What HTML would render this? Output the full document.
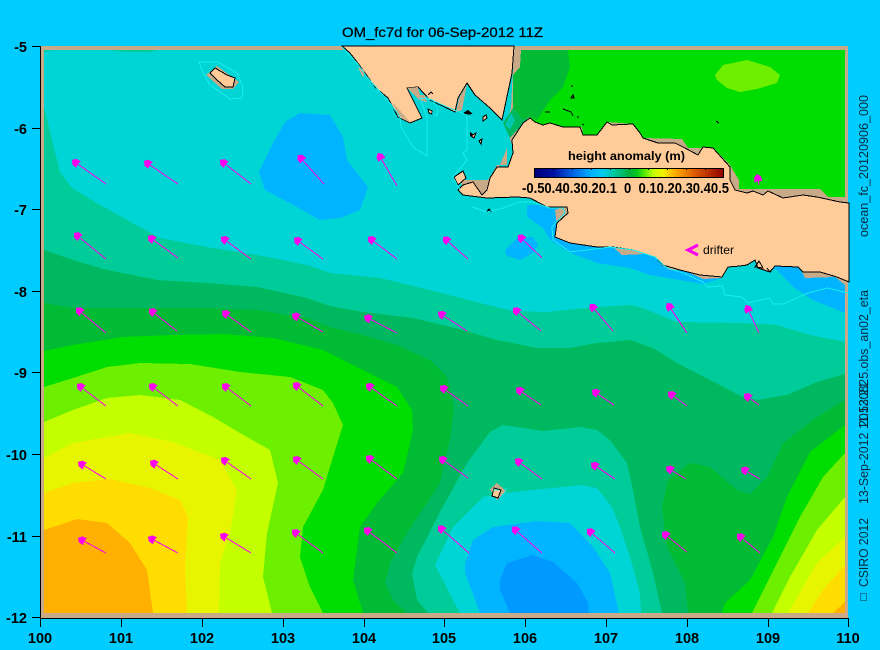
<!DOCTYPE html>
<html><head><meta charset="utf-8"><style>
html,body{margin:0;padding:0;background:#00CCFF;width:880px;height:650px;overflow:hidden}
svg{display:block}
text{font-family:"Liberation Sans",sans-serif;fill:#000}
.a{font-weight:bold;font-size:14.5px}
.r{font-size:12.5px;fill:#0a2a3a}
.c{fill:none;stroke:#19EDEE;stroke-width:1}
.k{fill:none;stroke:#000;stroke-width:1}
.l{fill:#FFCC99;stroke:#000;stroke-width:1}
</style></head><body>
<svg width="880" height="650" viewBox="0 0 880 650" xmlns="http://www.w3.org/2000/svg">
<defs>
<marker id="h" markerUnits="userSpaceOnUse" markerWidth="12" markerHeight="12" refX="9" refY="5.5" orient="auto"><polygon points="9,5.5 6,2 1,1.5 2,5.5 1,9.5 6,9" fill="#FF00EE"/></marker>
<linearGradient id="cb"><stop offset="0" stop-color="#000078"/><stop offset=".1" stop-color="#0010a0"/><stop offset=".2" stop-color="#0060e0"/><stop offset=".3" stop-color="#00b0ff"/><stop offset=".36" stop-color="#00ccf0"/><stop offset=".42" stop-color="#00c8a0"/><stop offset=".5" stop-color="#00b040"/><stop offset=".54" stop-color="#00c820"/><stop offset=".58" stop-color="#50e800"/><stop offset=".63" stop-color="#c4ff00"/><stop offset=".68" stop-color="#f0f000"/><stop offset=".74" stop-color="#ffb000"/><stop offset=".84" stop-color="#e06000"/><stop offset="1" stop-color="#900000"/></linearGradient>
</defs>
<rect width="880" height="650" fill="#00CCFF"/>
<g shape-rendering="crispEdges">
<rect x="44" y="50" width="801" height="563" fill="#00D5D5"/>
<polygon fill="#00CC99" points="44,52 52,50 44,50"/><polygon fill="#00CC99" points="108,50 158,50 150,52 125,52"/>
<path fill="#00B4FF" d="M300,113 330,115 343,137 347,160 368,187 360,210 340,218 320,220 297,207 265,190 259,172 272,145 285,122Z"/>
<path fill="#00B4FF" d="M505,250 517,238 533,237 538,245 533,253 520,260 507,256Z"/>
<path fill="#00B4FF" d="M527,205 527,217 543,228 550,240 570,253 590,260 597,263 630,268 650,275 703,284 722,278 722,250 777,270 793,287 813,300 845,313 845,275 600,230 560,205Z"/>
<path fill="#00CC99" d="M44,107 52,140 60,172 72,188 100,205 140,227 160,238 207,247 257,255 307,265 330,273 380,278 430,290 480,303 513,311 547,312 597,307 630,305 643,308 677,322 743,323 777,325 810,335 845,342 845,613 44,613Z"/>
<path fill="#00B860" d="M44,250 73,260 107,270 157,280 207,283 257,287 307,298 330,306 363,312 413,318 463,330 497,340 537,348 570,348 597,343 630,340 653,348 677,363 710,380 743,397 757,400 787,395 817,382 845,374 845,613 44,613Z"/>
<path fill="#00CC99" d="M428,613 417,600 412,573 417,557 440,512 467,463 490,432 503,425 543,431 580,427 597,430 610,440 627,463 633,490 640,527 653,573 662,613Z"/>
<path fill="#00D5D5" d="M460,613 453,600 435,565 453,527 483,497 513,492 553,488 580,485 597,488 612,507 620,527 630,557 640,593 641,613Z"/>
<path fill="#00B4FF" d="M480,613 465,573 465,563 473,540 493,527 537,521 570,523 593,547 610,573 619,613Z"/>
<path fill="#0099FF" d="M510,613 500,590 500,580 507,563 533,555 553,562 577,583 588,603 589,613Z"/>
<path fill="#00BB33" d="M44,303 73,308 140,308 207,308 257,310 307,318 330,327 363,335 397,345 430,360 447,377 454,407 450,440 445,460 440,483 407,533 390,563 385,583 393,600 407,613 44,613Z"/>
<path fill="#00BB33" d="M688,613 685,583 667,547 662,507 668,480 690,463 710,467 737,490 750,494 767,477 783,443 817,417 845,400 845,613Z"/>
<path fill="#00DD00" d="M44,351 73,345 123,337 173,335 223,334 273,338 323,350 363,370 397,387 412,410 413,430 403,473 377,503 360,527 353,580 363,613 44,613Z"/>
<path fill="#00DD00" d="M722,613 725,603 750,580 773,537 787,497 810,452 845,425 845,613Z"/>
<path fill="#6CF000" d="M44,387 73,378 107,367 140,363 190,364 240,372 290,377 323,390 333,403 343,425 333,457 323,490 303,527 300,557 310,587 323,613 44,613Z"/>
<path fill="#6CF000" d="M752,613 777,563 800,517 823,477 845,453 845,613Z"/>
<path fill="#C4FF00" d="M44,422 73,410 107,398 140,395 180,400 213,417 240,433 270,450 278,483 267,533 263,577 272,613 44,613Z"/>
<path fill="#C4FF00" d="M772,613 790,577 817,530 845,497 845,613Z"/>
<path fill="#E8F500" d="M44,458 73,443 130,433 173,442 220,460 237,490 230,533 220,563 219,613 44,613Z"/>
<path fill="#E8F500" d="M788,613 817,563 845,537 845,613Z"/>
<path fill="#FFDD00" d="M44,493 73,483 110,479 150,488 180,500 188,517 185,567 187,613 44,613Z"/>
<path fill="#FFDD00" d="M808,613 823,590 845,565 845,613Z"/>
<path fill="#FFB000" d="M44,530 77,519 107,523 130,543 147,570 153,613 44,613Z"/>
<path fill="#FFB000" d="M833,613 845,602 845,613Z"/>
<!-- border -->
<rect x="41" y="46" width="807" height="4" fill="#C8AA88"/>
<rect x="41" y="46" width="3" height="572" fill="#C8AA88"/>
<rect x="845" y="46" width="3" height="572" fill="#C8AA88"/>
<rect x="41" y="613" width="807" height="5" fill="#C8AA88"/>
<!-- north sea -->
<polygon fill="#C8AA88" points="514,47 848,47 848,210 739,200 512,145 505,125 511,108"/>
<polygon fill="#00DD00" points="521,50 845,50 845,197 828,197 820,189 739,189 739,180 730,165 713,148 688,148 682,139 643,138 633,124 607,122 597,137 583,135 582,127 567,128 550,123 543,130 535,123 529,117 513,118 513,75 520,67"/>
<polygon fill="#00BB33" points="521,50 568,50 570,67 563,87 550,100 537,120 529,117 523,120 513,108 513,75 520,67"/>
<polygon fill="#00B860" points="503,123 513,108 523,120 529,117 510,138"/>
<polygon fill="#00C8B0" points="505,125 511,113 515,120 510,130"/>
<polygon fill="#6CF000" points="715,75 723,65 747,60 770,67 780,75 777,83 757,89 740,92 727,88 717,80"/>
<!-- tan slivers -->
<polygon fill="#C8AA88" points="507,148 507,165 497,165 488,180 462,180 461,190 470,184 482,197 490,188"/>
<polygon fill="#C8AA88" points="555,210 568,205 570,215 557,226"/>
<polygon fill="#C8AA88" points="613,247 622,255 645,254 633,250"/>
<polygon fill="#C8AA88" points="660,264 670,270 680,270"/>
<polygon fill="#C8AA88" points="690,273 703,279 722,278 722,275"/>
<polygon fill="#C8AA88" points="802,272 805,278 835,277 845,285 848,290 848,280 820,271"/>
<polygon fill="#C8AA88" points="456,112 459,98 467,84 462,110"/>
<polygon fill="#C8AA88" points="206,75 217,66 239,82 233,89 222,89"/>
<polygon fill="#C8AA88" points="490,489 497,483 506,491 497,500"/>
<!-- land -->
<polygon class="l" points="342,46 350,53 357,62 363,70 375,87 388,98 398,117 410,123 422,118 407,88 418,87 430,100 455,112 458,98 467,83 475,95 490,108 502,120 512,73 514,46"/>
<polygon fill="#C8AA88" points="407,88 418,87 420,95 425,95 427,102 419,100"/>
<polygon fill="#C8AA88" points="358,67 365,70 363,78"/>
<polygon fill="#C8AA88" points="392,102 410,122 398,115"/>
<polygon class="l" points="512,140 523,123 530,118 535,122 543,125 550,123 563,127 580,127 583,135 597,135 607,122 612,125 633,124 640,133 643,138 658,143 675,143 683,147 698,155 703,147 713,148 730,167 730,180 735,190 747,193 753,191 763,195 768,191 783,198 803,195 817,197 840,202 849,203 849,282 837,277 820,272 803,272 798,267 775,266 770,272 758,268 755,260 747,265 740,266 728,267 722,277 700,275 680,270 663,265 655,257 633,250 613,247 597,247 570,243 555,237 557,223 568,213 567,207 547,207 530,198 517,197 487,198 463,195 458,190 463,185 473,182 482,195 487,190 490,178 497,167 508,167 513,153"/>
<polygon class="l" points="210,73 215,68 227,75 235,78 233,87 225,87 217,80"/>
<polygon class="l" points="494,488 501,490 498,498 492,496"/>
<polygon class="l" points="454,177 463,171 466,178 458,185"/>
<polygon class="l" points="428,109 432,111 432,114 429,113"/>
<polygon class="l" points="483,117 486,115 487,118 483,121"/>
<polygon class="l" points="479,141 482,139 481,144"/>
<polygon class="l" points="471,136 476,133 474,138"/>
<polygon fill="#000" points="463,113 468,110 473,114 465,115"/>
<polygon fill="#000" points="486,212 489,208 492,212"/>
<polygon fill="#000" points="470,132 473,134 474,135 470,136"/>
<path class="k" d="M571,86h2M571,98l2-3 1,3zM545,112h5M563,109l8,3 2,4M577,117h2M582,124l2,1M716,121l3,2M428,95l3,-3 2,2M755,267l4-6 4,7zM767,268l3,4 2-3"/>
<!-- cyan -->
<path class="c" d="M199,62 218,62 237,73 243,87 242,98 230,99 210,85 203,72Z"/>
<path class="c" d="M342,47 357,63 367,77 390,103 400,117 401,127 413,147 427,156 427,117 420,98 433,100 438,110 437,116 432,113"/>
<path class="c" d="M425,97 447,107 467,115 467,150 463,153 467,160 453,177 460,190"/>
<path class="c" d="M472,207 487,212 503,208 520,202 533,202 550,208 563,208 565,213 552,227 553,240 570,252 587,250 610,247 633,250 655,257 667,268 683,273 703,282 707,287 722,286 725,295 742,297 748,303 770,298 773,304 783,304 808,293 827,288 848,293"/>
<path class="c" d="M502,495a8,8 0 0 0 4,-7M493,490h6"/>
<!-- arrows -->
<g stroke="#FF00EE" stroke-width="1">
<line x1="106" y1="184" x2="72" y2="160" marker-end="url(#h)"/><line x1="178" y1="184" x2="144" y2="161" marker-end="url(#h)"/><line x1="251" y1="184" x2="220" y2="160" marker-end="url(#h)"/><line x1="324" y1="184" x2="298" y2="155" marker-end="url(#h)"/><line x1="397" y1="186" x2="378" y2="153" marker-end="url(#h)"/>
<line x1="106" y1="259" x2="74" y2="233" marker-end="url(#h)"/><line x1="178" y1="258" x2="148" y2="236" marker-end="url(#h)"/><line x1="251" y1="259" x2="221" y2="237" marker-end="url(#h)"/><line x1="323" y1="259" x2="294" y2="238" marker-end="url(#h)"/><line x1="397" y1="259" x2="368" y2="237" marker-end="url(#h)"/><line x1="468" y1="259" x2="443" y2="237" marker-end="url(#h)"/><line x1="542" y1="258" x2="518" y2="235" marker-end="url(#h)"/>
<line x1="106" y1="333" x2="76" y2="308" marker-end="url(#h)"/><line x1="177" y1="331" x2="149" y2="309" marker-end="url(#h)"/><line x1="251" y1="332" x2="222" y2="311" marker-end="url(#h)"/><line x1="323" y1="332" x2="292" y2="314" marker-end="url(#h)"/><line x1="397" y1="333" x2="364" y2="316" marker-end="url(#h)"/><line x1="467" y1="331" x2="438" y2="312" marker-end="url(#h)"/><line x1="541" y1="331" x2="513" y2="308" marker-end="url(#h)"/><line x1="613" y1="331" x2="590" y2="304" marker-end="url(#h)"/><line x1="687" y1="333" x2="667" y2="303" marker-end="url(#h)"/><line x1="759" y1="333" x2="746" y2="305" marker-end="url(#h)"/>
<line x1="106" y1="406" x2="77" y2="384" marker-end="url(#h)"/><line x1="178" y1="406" x2="149" y2="384" marker-end="url(#h)"/><line x1="251" y1="406" x2="222" y2="384" marker-end="url(#h)"/><line x1="323" y1="406" x2="293" y2="383" marker-end="url(#h)"/><line x1="397" y1="406" x2="366" y2="384" marker-end="url(#h)"/><line x1="468" y1="406" x2="440" y2="386" marker-end="url(#h)"/><line x1="541" y1="405" x2="516" y2="388" marker-end="url(#h)"/><line x1="614" y1="405" x2="592" y2="390" marker-end="url(#h)"/><line x1="687" y1="406" x2="668" y2="392" marker-end="url(#h)"/><line x1="759" y1="405" x2="744" y2="394" marker-end="url(#h)"/>
<line x1="106" y1="479" x2="78" y2="462" marker-end="url(#h)"/><line x1="178" y1="479" x2="150" y2="461" marker-end="url(#h)"/><line x1="251" y1="479" x2="221" y2="458" marker-end="url(#h)"/><line x1="323" y1="479" x2="293" y2="457" marker-end="url(#h)"/><line x1="397" y1="479" x2="366" y2="456" marker-end="url(#h)"/><line x1="468" y1="478" x2="439" y2="457" marker-end="url(#h)"/><line x1="542" y1="479" x2="515" y2="459" marker-end="url(#h)"/><line x1="615" y1="479" x2="591" y2="463" marker-end="url(#h)"/><line x1="686" y1="479" x2="666" y2="467" marker-end="url(#h)"/><line x1="760" y1="479" x2="741" y2="468" marker-end="url(#h)"/>
<line x1="106" y1="553" x2="78" y2="538" marker-end="url(#h)"/><line x1="178" y1="553" x2="148" y2="537" marker-end="url(#h)"/><line x1="251" y1="553" x2="220" y2="534" marker-end="url(#h)"/><line x1="323" y1="553" x2="292" y2="530" marker-end="url(#h)"/><line x1="397" y1="553" x2="364" y2="528" marker-end="url(#h)"/><line x1="469" y1="553" x2="438" y2="526" marker-end="url(#h)"/><line x1="542" y1="553" x2="512" y2="527" marker-end="url(#h)"/><line x1="615" y1="553" x2="587" y2="529" marker-end="url(#h)"/><line x1="687" y1="552" x2="662" y2="532" marker-end="url(#h)"/><line x1="760" y1="553" x2="737" y2="534" marker-end="url(#h)"/>
<line x1="759" y1="185" x2="757" y2="174" marker-end="url(#h)"/>
</g>
<path d="M698,245 688,250 698,255" fill="none" stroke="#FF00EE" stroke-width="3"/>
<!-- axes -->
<path stroke="#000" stroke-width="1" fill="none" d="M40.5,46V618.5H848.5V627M32,46.5H41M32,128.5H41M32,209.5H41M32,291.5H41M32,372.5H41M32,454.5H41M32,536.5H41M32,617.5H41M40.5,618V627M121.5,618V627M202.5,618V627M283.5,618V627M364.5,618V627M444.5,618V627M525.5,618V627M606.5,618V627M687.5,618V627M768.5,618V627"/>
<!-- colourbar -->
<rect x="534.5" y="168.5" width="189" height="9" fill="url(#cb)" stroke="#000"/>
<path stroke="#000" d="M553.5,168V170M572.5,168V170M591.5,168V170M610.5,168V170M629.5,168V170M648.5,168V170M667.5,168V170M686.5,168V170M705.5,168V170"/>
<rect x="860.5" y="593.5" width="6" height="7" fill="none" stroke="#0a2a3a" stroke-dasharray="1 1"/>
</g>
<text x="342" y="37" font-size="14" textLength="201" lengthAdjust="spacingAndGlyphs" stroke="#000" stroke-width=".25">OM_fc7d for 06-Sep-2012 11Z</text>
<g text-anchor="end">
<text x="27" y="52" class="a">-5</text><text x="27" y="134" class="a">-6</text><text x="27" y="215" class="a">-7</text><text x="27" y="297" class="a">-8</text><text x="27" y="378" class="a">-9</text><text x="27" y="460" class="a">-10</text><text x="27" y="542" class="a">-11</text><text x="27" y="623" class="a">-12</text>
</g>
<g text-anchor="middle">
<text x="40" y="643" class="a">100</text><text x="121" y="643" class="a">101</text><text x="202" y="643" class="a">102</text><text x="283" y="643" class="a">103</text><text x="364" y="643" class="a">104</text><text x="444" y="643" class="a">105</text><text x="525" y="643" class="a">106</text><text x="606" y="643" class="a">107</text><text x="687" y="643" class="a">108</text><text x="768" y="643" class="a">109</text><text x="848" y="643" class="a">110</text>
</g>
<text x="568" y="160" font-size="12" font-weight="bold" textLength="117" lengthAdjust="spacingAndGlyphs">height anomaly (m)</text>
<text x="522" y="193" class="a" textLength="207" lengthAdjust="spacingAndGlyphs">-0.50.40.30.20.1&#160;&#160;0&#160;&#160;0.10.20.30.40.5</text>
<text x="703" y="254" font-size="12" textLength="31" lengthAdjust="spacingAndGlyphs">drifter</text>
<text class="r" transform="translate(868,237) rotate(-90)" textLength="142" lengthAdjust="spacingAndGlyphs">ocean_fc_20120906_000</text>
<text class="r" transform="translate(868,427) rotate(-90)" textLength="137" lengthAdjust="spacingAndGlyphs">20120825.obs_an02_eta</text>
<text class="r" transform="translate(868,504) rotate(-90)" textLength="122" lengthAdjust="spacingAndGlyphs">13-Sep-2012 11:53:21</text>
<text class="r" transform="translate(868,587) rotate(-90)" textLength="69" lengthAdjust="spacingAndGlyphs">CSIRO 2012</text>
</svg>
</body></html>
